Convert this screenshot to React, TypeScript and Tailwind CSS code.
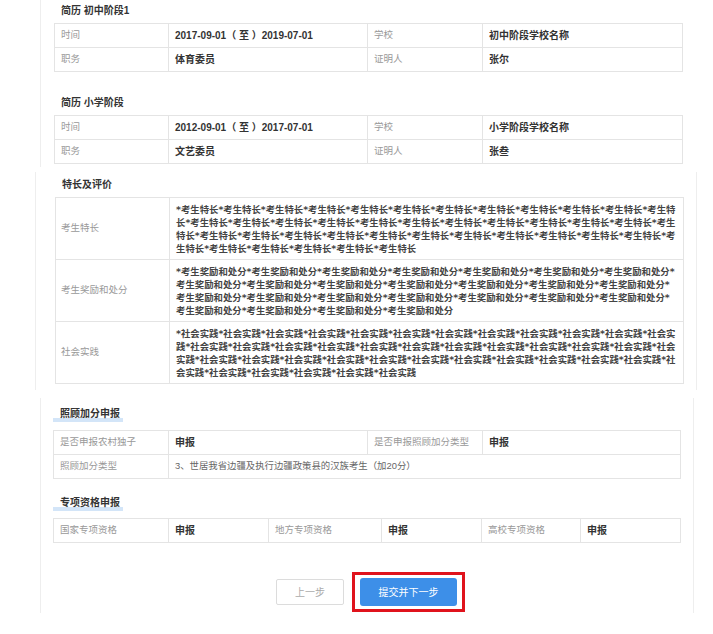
import React from 'react';

const line = 'border-[#e4e4e4]';

const Label = ({ children, span }: { children: React.ReactNode; span?: string }) => (
    <div className={`h-[24px] flex items-center pl-[6px] border-r border-b ${line} text-[9.5px] text-[#999] ${span ?? ''}`}>
        {children}
    </div>
);

const Value = ({ children, bold = true, span }: { children: React.ReactNode; bold?: boolean; span?: string }) => (
    <div
        className={`h-[24px] flex items-center pl-[6px] border-r border-b ${line} ${
            bold ? 'text-[10px] font-bold text-[#333]' : 'text-[9.4px] text-[#666]'
        } ${span ?? ''}`}
    >
        {children}
    </div>
);

const Heading = ({ children }: { children: React.ReactNode }) => (
    <div className="h-[13px] leading-[13px] pl-[20px] text-[10px] font-bold text-[#333]">{children}</div>
);

const BarHeading = ({ children }: { children: React.ReactNode }) => (
    <div className="flex h-[15px]">
        <span className="block h-[15px] leading-[13px] pl-[7px] pr-[3px] text-[10px] font-bold text-[#333] bg-[linear-gradient(to_bottom,transparent_70%,#d3e5f8_70%)]">
            {children}
        </span>
    </div>
);

const Resume = ({ title, time, school, duty, witness }: { title: string; time: string; school: string; duty: string; witness: string }) => (
    <div>
        <div className="-ml-[13px]">
            <Heading>{title}</Heading>
        </div>
        <div className={`mt-[6px] w-fit grid grid-cols-[114px_199px_115px_200px] border-t border-l ${line}`}>
            <Label>时间</Label>
            <Value>{time}</Value>
            <Label>学校</Label>
            <Value>{school}</Value>
            <Label>职务</Label>
            <Value>{duty}</Value>
            <Label>证明人</Label>
            <Value>{witness}</Value>
        </div>
    </div>
);

const LongRow = ({ label, text }: { label: string; text: string }) => (
    <>
        <div className={`h-[62px] flex items-center pl-[5px] border-r border-b ${line} text-[9.5px] text-[#999]`}>{label}</div>
        <div className={`h-[62px] flex items-center pl-[6px] border-r border-b ${line}`}>
            <div className="w-[500.5px] text-[9.4px] leading-[13px] font-bold text-[#444] break-all font-['DejaVu_Sans','Noto_Sans_CJK_SC',sans-serif]">
                {text}
            </div>
        </div>
    </>
);

export default function App() {
    const talent = '*考生特长'.repeat(41);
    const award = '*考生奖励和处分'.repeat(25);
    const practice = '*社会实践'.repeat(41);

    return (
        <div className="w-[713px] min-h-[634px] bg-white font-['Liberation_Sans','Noto_Sans_CJK_SC',sans-serif]">
            {/* 简历 */}
            <div className="ml-[40px] h-[167px] border-l border-l-[#eeeeee] pl-[13px] pt-[4px]">
                <Resume title="简历 初中阶段1" time="2017-09-01（ 至 ）2019-07-01" school="初中阶段学校名称" duty="体育委员" witness="张尔" />
                <div className="mt-[24px]">
                    <Resume title="简历 小学阶段" time="2012-09-01（ 至 ）2017-07-01" school="小学阶段学校名称" duty="文艺委员" witness="张叁" />
                </div>
            </div>

            {/* 特长及评价 */}
            <div className="mt-[5px] ml-[35px] w-[662px] h-[218px] border-l border-r border-[#eeeeee] pl-[19px] pt-[6px]">
                <div className="h-[13px] leading-[13px] pl-[7px] text-[10px] font-bold text-[#333]">特长及评价</div>
                <div className={`mt-[6px] w-fit grid grid-cols-[114px_514px] border-t border-l ${line}`}>
                    <LongRow label="考生特长" text={talent} />
                    <LongRow label="考生奖励和处分" text={award} />
                    <LongRow label="社会实践" text={practice} />
                </div>
            </div>

            {/* 照顾加分 / 专项资格 */}
            <div className="mt-[8px] ml-[40px] w-[654px] h-[215px] border-l border-r border-[#eeeeee] pl-[12px] pt-[9px]">
                <BarHeading>照顾加分申报</BarHeading>
                <div className={`mt-[8px] w-fit grid grid-cols-[115px_199px_115px_198px] border-t border-l ${line}`}>
                    <Label>是否申报农村独子</Label>
                    <Value>申报</Value>
                    <Label>是否申报照顾加分类型</Label>
                    <Value>申报</Value>
                    <Label>照顾加分类型</Label>
                    <Value bold={false} span="col-span-3">3、世居我省边疆及执行边疆政策县的汉族考生（加20分）</Value>
                </div>

                <div className="mt-[17px]">
                    <BarHeading>专项资格申报</BarHeading>
                </div>
                <div className={`mt-[7px] w-fit grid grid-cols-[115px_100px_113px_100px_99px_100px] border-t border-l ${line}`}>
                    <Label>国家专项资格</Label>
                    <Value>申报</Value>
                    <Label>地方专项资格</Label>
                    <Value>申报</Value>
                    <Label>高校专项资格</Label>
                    <Value>申报</Value>
                </div>

                <div className="mt-[29px] flex items-center pl-[223px] gap-[8px]">
                    <button className="w-[68px] h-[26px] border border-[#dcdcdc] rounded-[2px] bg-white text-[10px] text-[#aaa]">
                        上一步
                    </button>
                    <div className="border-[3px] border-[#e0131c] px-[5px] py-[3px]">
                        <button className="w-[97px] h-[28px] rounded-[3px] bg-[#3d8fe8] text-[10px] text-white">提交并下一步</button>
                    </div>
                </div>
            </div>
        </div>
    );
}
